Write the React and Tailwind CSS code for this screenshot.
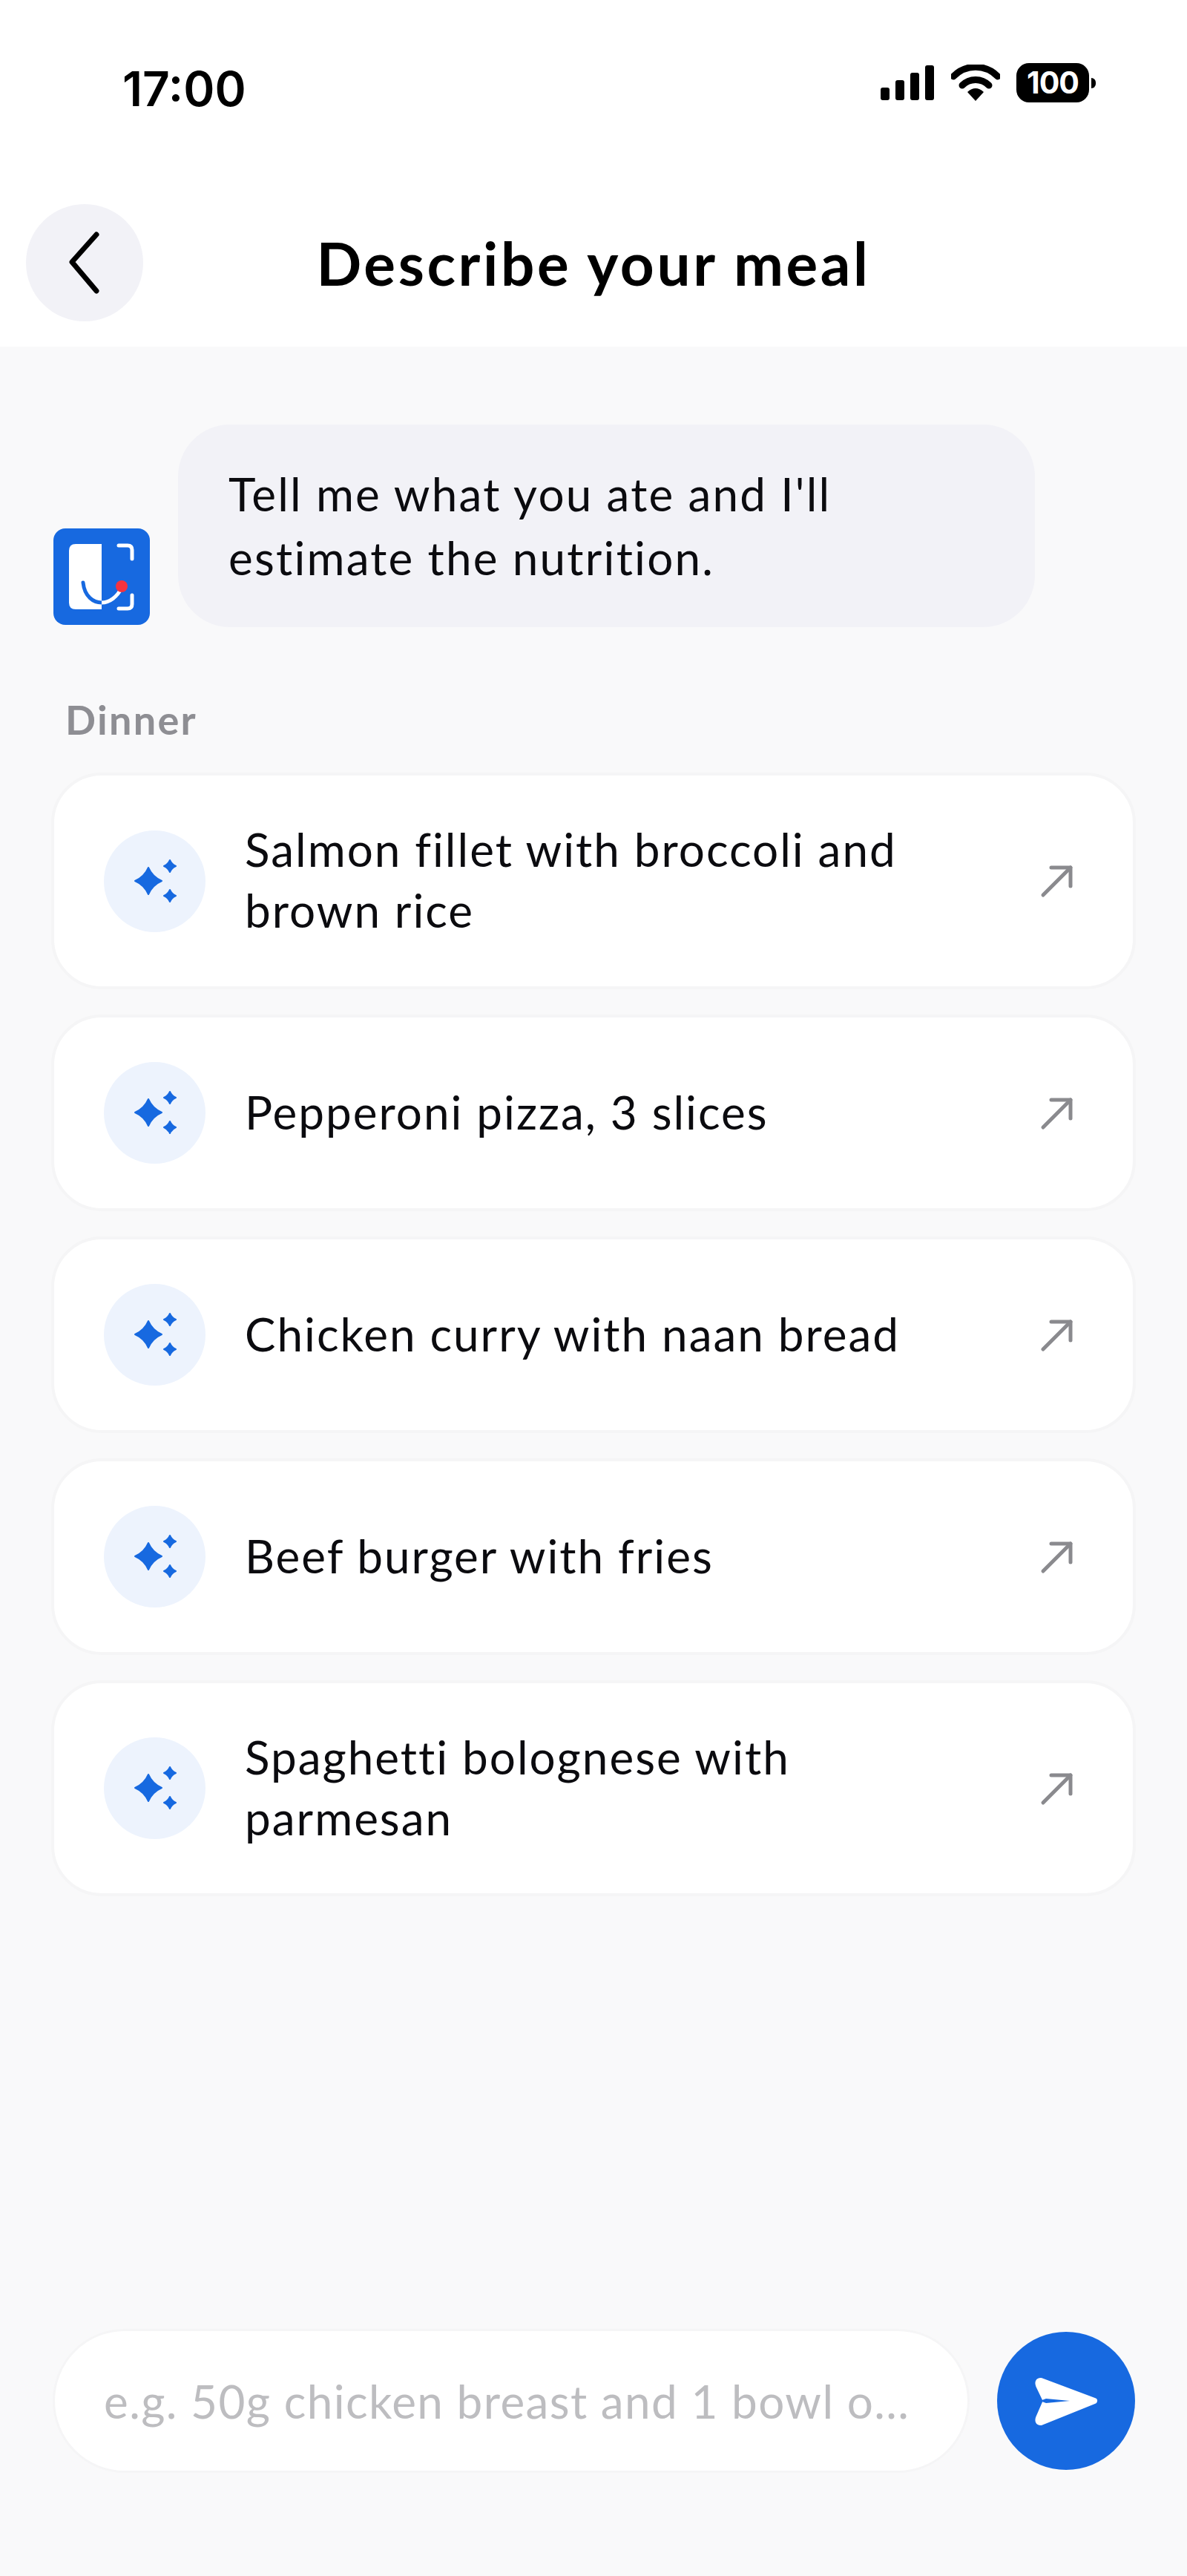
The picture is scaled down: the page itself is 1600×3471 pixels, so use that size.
import React from 'react';

const meals = [
  { text: 'Salmon fillet with broccoli and\nbrown rice', height: 'h-[292px]' },
  { text: 'Pepperoni pizza, 3 slices', height: 'h-[265px]' },
  { text: 'Chicken curry with naan bread', height: 'h-[265px]' },
  { text: 'Beef burger with fries', height: 'h-[265px]' },
  { text: 'Spaghetti bolognese with\nparmesan', height: 'h-[291px]' },
];

function StatusIcons() {
  return (
    <div className="flex items-center">
      <svg width="74" height="50" viewBox="0 0 74 50" fill="#000">
        <rect x="1" y="31" width="12" height="17" rx="3" />
        <rect x="21" y="21" width="12" height="27" rx="3" />
        <rect x="41" y="11" width="12" height="37" rx="3" />
        <rect x="61" y="1" width="12" height="47" rx="3" />
      </svg>
      <svg className="ml-[22px]" width="66" height="50" viewBox="0 0 66 50" fill="none">
        <path d="M3 16 C20 -1 46 -1 63 16" stroke="#000" strokeWidth="9" strokeLinecap="round" />
        <path d="M15 28 C25 18 41 18 51 28" stroke="#000" strokeWidth="9" strokeLinecap="round" />
        <path d="M22 37 Q33 27 44 37 L33 49 Z" fill="#000" />
      </svg>
      <div className="ml-[22px] w-[98px] h-[53px] rounded-[17px] bg-black text-white flex items-center justify-center text-[41px] leading-none font-bold tracking-[-1px] font-['Inter',sans-serif]">
        100
      </div>
      <div className="ml-[3px] w-[6px] h-[14px] bg-black rounded-r-full" />
    </div>
  );
}

function Logo() {
  return (
    <svg className="shrink-0 ml-[3px] mb-[3px]" width="130" height="130" viewBox="0 0 130 130">
      <rect width="130" height="130" rx="16" fill="#1769e0" />
      <path d="M30 21 H65 V109 H30 Q21 109 21 100 V30 Q21 21 30 21 Z" fill="#fff" />
      <path d="M40 73 C42 92 54 100 65 100" fill="none" stroke="#1769e0" strokeWidth="5" strokeLinecap="round" />
      <path d="M65 100 C76 100 86 92 92 80" fill="none" stroke="#fff" strokeWidth="5" />
      <path d="M88 23 H100 Q106 23 106 29 V41" fill="none" stroke="#fff" strokeWidth="5" strokeLinecap="round" />
      <path d="M106 90 V102 Q106 108 100 108 H88" fill="none" stroke="#fff" strokeWidth="5" strokeLinecap="round" />
      <circle cx="92" cy="78" r="8" fill="#f5333f" />
    </svg>
  );
}

function Star({ cx, cy, r }) {
  const k = r * 0.3;
  return (
    <path
      d={`M${cx} ${cy - r} Q${cx + k} ${cy - k} ${cx + r} ${cy} Q${cx + k} ${cy + k} ${cx} ${cy + r} Q${cx - k} ${cy + k} ${cx - r} ${cy} Q${cx - k} ${cy - k} ${cx} ${cy - r} Z`}
      stroke="#1769e0"
      strokeWidth="2"
      strokeLinejoin="round"
    />
  );
}

function MealCard({ text, height }) {
  return (
    <div className={`${height} flex items-center bg-white border-4 border-[#f5f5f6] rounded-[68px] pl-[67px] pr-[79px]`}>
      <div className="w-[137px] h-[137px] shrink-0 rounded-full bg-[#edf3fd]">
        <svg width="137" height="137" viewBox="0 0 137 137" fill="#1769e0">
          <Star cx={60} cy={68} r={18} />
          <Star cx={89} cy={48} r={8} />
          <Star cx={89} cy={88} r={8} />
        </svg>
      </div>
      <p className="flex-1 ml-[53px] pb-[4px] text-[62px] leading-[82px] tracking-[2px] text-[#0b0b0f] whitespace-pre-line">{text}</p>
      <svg className="shrink-0" width="46" height="46" viewBox="0 0 46 46" fill="none" stroke="#8a8a8e" strokeWidth="5" strokeLinecap="round" strokeLinejoin="round">
        <path d="M4 42 L41 5" />
        <path d="M15 5 H41 V30" />
      </svg>
    </div>
  );
}

export default function App() {
  return (
    <div className="w-[1600px] h-[3471px] flex flex-col bg-[#f9f9fa] font-['Lato',sans-serif] text-black overflow-hidden">
      <header className="h-[467px] shrink-0 bg-white">
        <div className="h-[275px] pt-[85px] pl-[165px] pr-[123px] flex items-start justify-between">
          <span className="text-[64px] leading-[70px] font-semibold font-['Inter',sans-serif]">17:00</span>
          <StatusIcons />
        </div>
        <div className="flex items-center px-[35px]">
          <button className="w-[158px] h-[158px] rounded-full bg-[#f2f2f7] flex items-center justify-center">
            <svg width="44" height="84" viewBox="0 0 44 84" fill="none" stroke="#000" strokeWidth="7" strokeLinecap="round" strokeLinejoin="round">
              <path d="M38 4 L5 41 L38 80" />
            </svg>
          </button>
          <h1 className="flex-1 text-center text-[80px] leading-none font-bold tracking-[3.6px]">Describe your meal</h1>
          <div className="w-[158px]" />
        </div>
      </header>

      <main className="flex-1 flex flex-col px-[69px] pt-[105px]">
        <div className="flex items-end gap-[38px]">
          <Logo />
          <div className="w-[1155px] h-[273px] rounded-[70px] bg-[#f2f2f7] pl-[68px] pt-[50px] text-[62px] leading-[86px] tracking-[2.2px] text-[#0b0b0f]">
            Tell me what you ate and I'll<br />estimate the nutrition.
          </div>
        </div>

        <p className="mt-[93px] ml-[19px] text-[54px] leading-[64px] font-bold tracking-[2.3px] text-[#8e8e93]">Dinner</p>

        <div className="mt-[39px] flex flex-col gap-[34px]">
          {meals.map((meal) => (
            <MealCard key={meal.text} text={meal.text} height={meal.height} />
          ))}
        </div>

        <div className="mt-auto mb-[139px] ml-[2px] flex items-center gap-[37px]">
          <input
            readOnly
            placeholder="e.g. 50g chicken breast and 1 bowl o..."
            className="w-[1236px] h-[194px] rounded-full bg-white border-[3px] border-[#f5f5f6] pl-[66px] pr-[20px] text-[62px] tracking-[1.4px] outline-none placeholder:text-[#bdbdc0]"
          />
          <button className="w-[186px] h-[186px] shrink-0 rounded-full bg-[#1769e0]">
            <svg width="186" height="186" viewBox="0 0 186 186">
              <path d="M59 66 L131 93 L59 122 Q54 122 56 116 L66 93 L56 72 Q54 66 59 66 Z" fill="#fff" stroke="#fff" strokeWidth="8" strokeLinejoin="round" />
              <path d="M58 93 L66 90 L98 93 L66 96 Z" fill="#1769e0" />
            </svg>
          </button>
        </div>
      </main>
    </div>
  );
}
